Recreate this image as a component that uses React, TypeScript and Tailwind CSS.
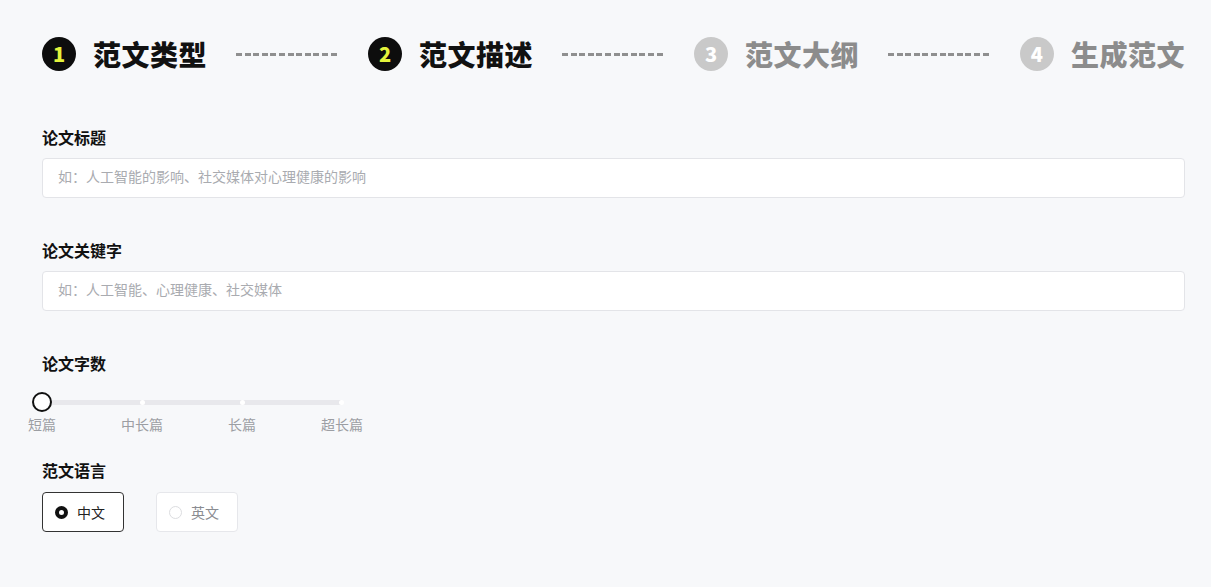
import React from "react";

const font = { fontFamily: '"Noto Sans CJK SC", "Noto Sans", sans-serif' };

function Step({ n, label, active }: { n: string; label: string; active: boolean }) {
  return (
    <div className="flex items-center gap-[17px] shrink-0">
      <div
        className={
          "w-[34px] h-[34px] rounded-full flex items-center justify-center text-[20px] font-black leading-none " +
          (active ? "bg-[#0d0d0d] text-[#e4f43c]" : "bg-[#c9c9c9] text-white")
        }
      >
        {n}
      </div>
      <div
        className={
          "text-[28px] font-black leading-none tracking-[0.5px] " +
          (active ? "text-[#111111]" : "text-[#8c8c8c]")
        }
      >
        {label}
      </div>
    </div>
  );
}

function Dashes() {
  return (
    <div className="w-[103px] shrink-0 h-[3px] bg-[repeating-linear-gradient(90deg,#8f8f8f_0px,#8f8f8f_6px,transparent_6px,transparent_8.6px)]" />
  );
}

export default function App() {
  const marks = ["短篇", "中长篇", "长篇", "超长篇"];
  return (
    <div className="w-[1211px] h-[587px] bg-[#f7f8fa] px-[42px] pt-[37px] overflow-hidden" style={font}>
      <div className="flex items-center justify-between w-[1143px] h-[34px]">
        <Step n="1" label="范文类型" active />
        <Dashes />
        <Step n="2" label="范文描述" active />
        <Dashes />
        <Step n="3" label="范文大纲" active={false} />
        <Dashes />
        <Step n="4" label="生成范文" active={false} />
      </div>

      <div className="mt-[56px] text-[16px] font-bold text-[#111] leading-[20px]">论文标题</div>
      <div className="mt-[11px] w-[1143px] h-[40px] bg-white border border-[#e3e4e8] rounded-[4px] flex items-center px-[15px] pb-[3px] text-[14px] text-[#a9abb0]">
        如：人工智能的影响、社交媒体对心理健康的影响
      </div>

      <div className="mt-[42px] text-[16px] font-bold text-[#111] leading-[20px]">论文关键字</div>
      <div className="mt-[11px] w-[1143px] h-[40px] bg-white border border-[#e3e4e8] rounded-[4px] flex items-center px-[15px] pb-[3px] text-[14px] text-[#a9abb0]">
        如：人工智能、心理健康、社交媒体
      </div>

      <div className="mt-[42px] text-[16px] font-bold text-[#111] leading-[20px]">论文字数</div>
      <div className="relative mt-[27px] w-[300px] h-[5px] bg-[#e8e8ec] rounded-full">
        <div className="absolute left-[98px] top-[0px] w-[5px] h-[5px] rounded-full bg-white" />
        <div className="absolute left-[198px] top-[0px] w-[5px] h-[5px] rounded-full bg-white" />
        <div className="absolute left-[297px] top-[0px] w-[5px] h-[5px] rounded-full bg-white" />
        <div className="absolute left-[-10px] top-[-8px] w-[20px] h-[20px] rounded-full bg-white border-2 border-[#111]" />
      </div>
      <div className="mt-[9px] flex w-[400px] ml-[-50px] text-[14px] text-[#9c9ea3] leading-[20px]">
        {marks.map((m) => (
          <div key={m} className="w-[100px] text-center">
            {m}
          </div>
        ))}
      </div>

      <div className="mt-[26px] text-[16px] font-bold text-[#111] leading-[20px]">范文语言</div>
      <div className="mt-[12px] flex gap-[32px]">
        <div className="w-[82px] h-[40px] border border-[#333] rounded-[4px] bg-white flex items-center pl-[12px] gap-[9px] text-[14px] text-[#222]">
          <div className="w-[13px] h-[13px] rounded-full border-[4px] border-[#111] bg-white" />
          中文
        </div>
        <div className="w-[82px] h-[40px] border border-[#e6e7eb] rounded-[4px] bg-white flex items-center pl-[12px] gap-[9px] text-[14px] text-[#8a8c91]">
          <div className="w-[13px] h-[13px] rounded-full border border-[#dcdde0] bg-white" />
          英文
        </div>
      </div>
    </div>
  );
}
